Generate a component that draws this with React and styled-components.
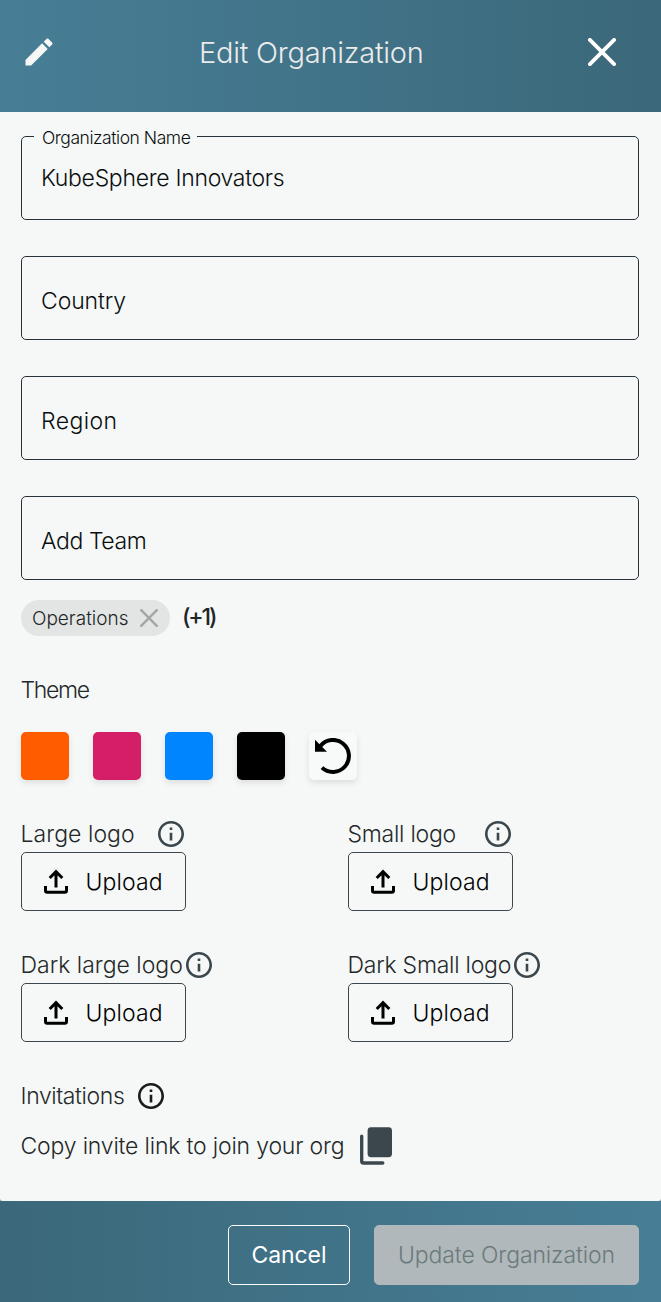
import React from "react";
import styled, { createGlobalStyle } from "styled-components";

const GlobalStyle = createGlobalStyle`
  * { box-sizing: border-box; }
  body { margin: 0; background: #9aa3a6; font-family: Inter, "Liberation Sans", sans-serif; font-weight: 300; }
  button { font: inherit; cursor: pointer; }
  svg { display: block; flex: none; }
`;

const Modal = styled.div`
  width: 661px;
  height: 1302px;
  display: flex;
  flex-direction: column;
  overflow: hidden;
`;

const Header = styled.header`
  height: 112px;
  flex: none;
  display: flex;
  align-items: center;
  padding: 0 45px 8px 21px;
  background: linear-gradient(90deg, #477e96, #3b687a);
`;

const Title = styled.h2`
  flex: 1;
  margin: 0 0 0 142px;
  padding-top: 2px;
  font-size: 29px;
  font-weight: 300;
  line-height: 40px;
  letter-spacing: -0.25px;
  color: #ebebeb;
`;

const IconButton = styled.button`
  display: flex;
  border: 0;
  padding: 0;
  background: none;
  color: ${(p) => p.$color || "#fff"};
`;

const Body = styled.main`
  height: 1089px;
  flex: none;
  padding: 24px 22px 0 21px;
  background: #f5f8f7;
  border-radius: 0 0 3px 3px;
`;

const Fields = styled.div`
  display: grid;
  gap: 36px;
`;

const Field = styled.fieldset`
  height: ${(p) => (p.$labelled ? 95 : 84)}px;
  min-width: 0;
  margin: ${(p) => (p.$labelled ? "-11px 0 0" : "0")};
  padding: ${(p) => (p.$labelled ? "14px 19px 0" : "28px 19px 0")};
  border: 1px solid #263238;
  border-radius: 5px;
  font-size: 23px;
  line-height: 32px;
  letter-spacing: ${(p) => p.$spacing || 0}px;
  color: #0b0e0f;
`;

const Legend = styled.legend`
  margin-left: -7px;
  padding: 3px 6px 0 8px;
  width: 163px;
  font-size: 17.5px;
  line-height: 20px;
  letter-spacing: -0.46px;
  white-space: nowrap;
`;

const ChipRow = styled.div`
  display: flex;
  align-items: center;
  gap: 12px;
  margin-top: 20px;
  height: 36px;
`;

const Chip = styled.span`
  display: flex;
  align-items: center;
  justify-content: space-between;
  width: 149px;
  height: 36px;
  padding: 0 12px 0 11px;
  border-radius: 18px;
  background: #e2e5e4;
  font-size: 19px;
  letter-spacing: 0;
  color: #222526;
`;

const More = styled.b`
  padding-bottom: 3px;
  font-size: 23px;
  font-weight: 500;
  letter-spacing: -2.2px;
  color: #222526;
`;

const Text = styled.span`
  font-size: 23px;
  line-height: 32px;
  letter-spacing: ${(p) => p.$spacing || 0}px;
  margin-left: -0.5px;
  white-space: nowrap;
  color: #25292a;
`;

const Section = styled.section`
  margin-top: 38px;
`;

const Swatches = styled.div`
  display: flex;
  gap: 24px;
  margin-top: 26px;
`;

const Swatch = styled.button`
  width: 48px;
  height: 48px;
  padding: 0;
  display: grid;
  place-items: center;
  border: 0;
  border-radius: 5px;
  background: ${(p) => p.$color};
  box-shadow: 0 3px 6px rgba(0, 0, 0, 0.1);
`;

const Logos = styled.section`
  display: grid;
  grid-template-columns: 327px 1fr;
  row-gap: 36px;
  margin-top: 36px;
`;

const LogoLabel = styled.div`
  display: flex;
  align-items: center;
  justify-content: space-between;
  width: ${(p) => p.$width}px;
  height: 36px;
  color: #3b474d;
`;

const UploadButton = styled.button`
  display: flex;
  align-items: center;
  gap: 16px;
  width: 165px;
  height: 59px;
  padding: 0 0 0 22px;
  border: 1px solid #3b474d;
  border-radius: 5px;
  background: transparent;
  font-size: 23px;
  letter-spacing: 0.1px;
  color: #000;
`;

const UploadText = styled.span`
  padding-left: 0.5px;
`;

const Invitations = styled.section`
  margin-top: 36px;
`;

const InviteRow = styled.div`
  display: flex;
  align-items: center;
  justify-content: space-between;
  width: ${(p) => p.$width}px;
  height: ${(p) => p.$height}px;
  color: ${(p) => p.$color};
`;

const Footer = styled.footer`
  height: 101px;
  flex: none;
  display: flex;
  justify-content: flex-end;
  gap: 24px;
  padding: 24px 22px 0 0;
  background: linear-gradient(90deg, #3b687a, #477e96);
`;

const Action = styled.button`
  width: ${(p) => p.$width}px;
  height: 60px;
  padding: 0;
  border: 1px solid ${(p) => (p.disabled ? "#b0b8bb" : "#fff")};
  border-radius: 5px;
  background: ${(p) => (p.disabled ? "#b0b8bb" : "transparent")};
  color: ${(p) => (p.disabled ? "#6b7a7c" : "#fff")};
  font-size: 23px;
  font-weight: ${(p) => (p.disabled ? 300 : 400)};
  letter-spacing: ${(p) => p.$spacing || 0}px;
`;

const EditIcon = () => (
  <svg width="36" height="36" viewBox="0 0 24 24" fill="#f5f8f7">
    <path d="M3 17.25V21h3.75L17.81 9.94l-3.75-3.75L3 17.25zM20.71 7.04c.39-.39.39-1.02 0-1.41l-2.34-2.34c-.39-.39-1.02-.39-1.41 0l-1.83 1.83 3.75 3.75 1.83-1.83z" />
  </svg>
);

const CloseIcon = ({ size, stroke }) => {
  const near = stroke / 2;
  const far = size - near;
  return (
    <svg width={size} height={size} viewBox={`0 0 ${size} ${size}`} stroke="currentColor" strokeWidth={stroke} strokeLinecap="round">
      <path d={`M${near} ${near}L${far} ${far}M${far} ${near}L${near} ${far}`} />
    </svg>
  );
};

const InfoIcon = () => (
  <svg width="32" height="32" viewBox="-0.3 -0.3 24.6 24.6" fill="currentColor">
    <path d="M11 7h2v2h-2zm0 4h2v6h-2zm1-9C6.48 2 2 6.48 2 12s4.48 10 10 10 10-4.48 10-10S17.52 2 12 2zm0 18c-4.41 0-8-3.59-8-8s3.59-8 8-8 8 3.59 8 8-3.59 8-8 8z" />
  </svg>
);

const ResetIcon = () => (
  <svg width="36" height="36" viewBox="0 0 36 36">
    <path d="M7 29.6A16 16 0 1 0 5.4 8" fill="none" stroke="#000" strokeWidth="4" />
    <path d="M0 1.8V13.8H12z" />
  </svg>
);

const UploadIcon = () => (
  <svg width="25" height="25" viewBox="0 0 25 25" fill="none" stroke="#000" strokeWidth="3">
    <path d="M12 2.8V18.6M5.7 9L12 2.6L18.3 9M1.5 17V21.5Q1.5 23.2 3.2 23.2H20.8Q22.5 23.2 22.5 21.5V17" />
  </svg>
);

const CopyIcon = () => (
  <svg width="32" height="38" viewBox="0 0 32 38">
    <rect x="7.6" y="0.3" width="24.4" height="29.9" rx="3.4" fill="#3b474d" />
    <path d="M1.7 9.2V34.3Q1.7 36 3.4 36H22.8" fill="none" stroke="#3b474d" strokeWidth="3.3" strokeLinecap="round" />
  </svg>
);

const fields = [
  { value: "KubeSphere Innovators", label: "Organization Name", spacing: -0.3 },
  { value: "Country", spacing: -0.1 },
  { value: "Region", spacing: 0.4 },
  { value: "Add Team", spacing: -0.4 },
];

const colors = ["#ff5c00", "#d41f68", "#0085ff", "#000"];

const logos = [
  { label: "Large logo", width: 166, spacing: 0.05 },
  { label: "Small logo", width: 166, spacing: -0.25 },
  { label: "Dark large logo", width: 193, spacing: 0 },
  { label: "Dark Small logo", width: 194, spacing: -0.24 },
];

export default function App() {
  return (
    <>
      <GlobalStyle />
      <Modal>
        <Header>
          <EditIcon />
          <Title>Edit Organization</Title>
          <IconButton aria-label="Close"><CloseIcon size={28} stroke={3.8} /></IconButton>
        </Header>
        <Body>
          <Fields>
            {fields.map((f) => (
              <Field key={f.value} $labelled={!!f.label} $spacing={f.spacing}>
                {f.label && <Legend>{f.label}</Legend>}
                {f.value}
              </Field>
            ))}
          </Fields>
          <ChipRow>
            <Chip>
              Operations
              <IconButton aria-label="Remove" $color="#a3a6a6"><CloseIcon size={18} stroke={2.4} /></IconButton>
            </Chip>
            <More>(+1)</More>
          </ChipRow>
          <Section>
            <Text as="div" $spacing={-1.3}>Theme</Text>
            <Swatches>
              {colors.map((c) => <Swatch key={c} $color={c} aria-label={c} />)}
              <Swatch $color="#f8f9f9" aria-label="Reset"><ResetIcon /></Swatch>
            </Swatches>
          </Section>
          <Logos>
            {logos.map((l) => (
              <div key={l.label}>
                <LogoLabel $width={l.width}>
                  <Text $spacing={l.spacing}>{l.label}</Text>
                  <InfoIcon />
                </LogoLabel>
                <UploadButton><UploadIcon /><UploadText>Upload</UploadText></UploadButton>
              </div>
            ))}
          </Logos>
          <Invitations>
            <InviteRow $width={146} $height={36} $color="#191c1d">
              <Text $spacing={-0.4}>Invitations</Text>
              <InfoIcon />
            </InviteRow>
            <InviteRow $width={371} $height={64}>
              <Text $spacing={-0.18}>Copy invite link to join your org</Text>
              <CopyIcon />
            </InviteRow>
          </Invitations>
        </Body>
        <Footer>
          <Action $width={122} $spacing={-0.1}>Cancel</Action>
          <Action $width={265} $spacing={-0.1} disabled>Update Organization</Action>
        </Footer>
      </Modal>
    </>
  );
}
